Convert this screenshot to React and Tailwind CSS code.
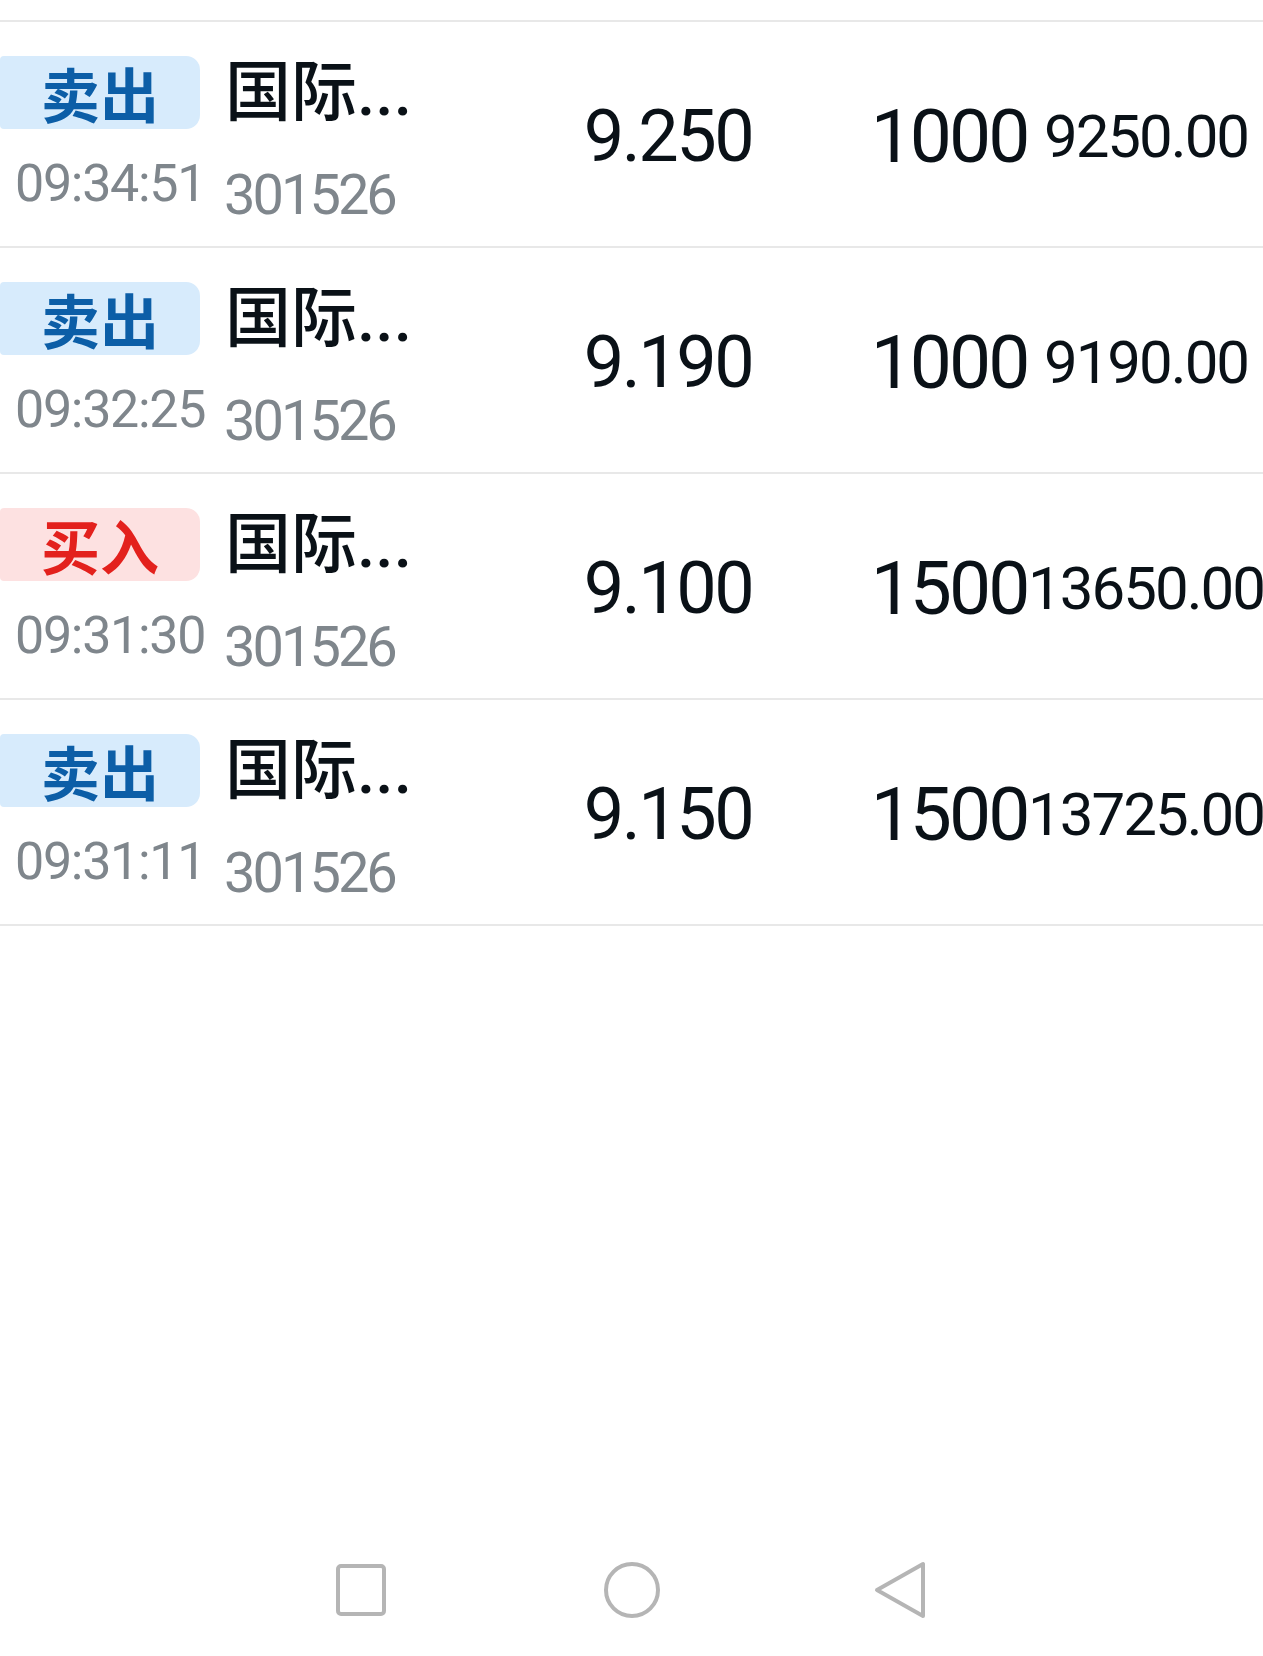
const trades = [
  { side: 'sell', time: '09:34:51', code: '301526', price: '9.250', qty: '1000', amount: '9250.00' },
  { side: 'sell', time: '09:32:25', code: '301526', price: '9.190', qty: '1000', amount: '9190.00' },
  { side: 'buy', time: '09:31:30', code: '301526', price: '9.100', qty: '1500', amount: '13650.00' },
  { side: 'sell', time: '09:31:11', code: '301526', price: '9.150', qty: '1500', amount: '13725.00' },
];

const num = "font-['Roboto','Liberation_Sans',sans-serif]";
const cjk = "font-['Roboto','Noto_Sans_CJK_SC',sans-serif]";

const SideBadge = ({ side }) =>
  side === 'buy' ? (
    <span className="flex h-[73px] w-[200px] items-center justify-center rounded-r-[14px] rounded-l-[4px] bg-[#fde1e1] font-['Noto_Sans_CJK_SC',sans-serif] text-[59px] font-bold leading-none text-[#e3211d]">
      买入
    </span>
  ) : (
    <span className="flex h-[73px] w-[200px] items-center justify-center rounded-r-[14px] rounded-l-[4px] bg-[#d7ebfc] font-['Noto_Sans_CJK_SC',sans-serif] text-[59px] font-bold leading-none text-[#0c5ea7]">
      卖出
    </span>
  );

const TradeRow = ({ trade }) => (
  <div className="flex h-[226px] border-t-2 border-[#e8e8e8]">
    <div className="flex w-[530px] shrink-0 flex-col pt-[34px]">
      <div className="flex items-center">
        <SideBadge side={trade.side} />
        <span className={`ml-[25px] ${cjk} text-[66px] font-medium leading-none text-[#0a1117]`}>
          国际...
        </span>
      </div>
      <div className="flex items-start">
        <span className={`mt-[29px] w-[200px] shrink-0 pl-[15px] ${num} text-[52px] leading-none tracking-[-1.3px] text-[#7f868c]`}>
          {trade.time}
        </span>
        <span className={`ml-[24px] mt-[38px] ${num} text-[56px] leading-none tracking-[-3px] text-[#7f868c]`}>
          {trade.code}
        </span>
      </div>
    </div>
    <div className="flex w-[276px] shrink-0 items-center justify-center pt-[6px]">
      <span className={`${num} text-[72px] leading-none tracking-[-2.5px] text-[#0a1117]`}>{trade.price}</span>
    </div>
    <div className="flex w-[286px] shrink-0 items-center justify-center pt-[4px]">
      <span className={`${num} text-[75px] leading-none tracking-[-3px] text-[#0a1117]`}>{trade.qty}</span>
    </div>
    <div className="flex w-[108px] shrink-0 items-center justify-center whitespace-nowrap pt-[5px]">
      <span className={`${num} text-[60px] leading-none tracking-[-2px] text-[#0a1117]`}>{trade.amount}</span>
    </div>
  </div>
);

const NavBar = () => (
  <div className="flex h-[132px] items-center justify-center gap-[208px]">
    <div className="flex w-[60px] justify-start">
      <svg width="54" height="56" viewBox="0 0 54 56" fill="none">
        <rect x="4" y="4" width="46" height="48" rx="3" stroke="#b5b5b5" strokeWidth="4" />
      </svg>
    </div>
    <div className="flex w-[60px] justify-center">
      <svg width="60" height="60" viewBox="0 0 60 60" fill="none">
        <circle cx="30" cy="30" r="26" stroke="#b5b5b5" strokeWidth="4" />
      </svg>
    </div>
    <div className="flex w-[60px] justify-center">
      <svg width="54" height="60" viewBox="0 0 54 60" fill="none">
        <path d="M50 4 L50 56 L4 30 Z" stroke="#b5b5b5" strokeWidth="4" strokeLinejoin="round" />
      </svg>
    </div>
  </div>
);

export default function App() {
  return (
    <div className="flex h-[1656px] w-full flex-col overflow-hidden bg-white">
      <div className="h-[20px] shrink-0" />
      {trades.map((t, i) => (
        <TradeRow key={i} trade={t} />
      ))}
      <div className="border-t-2 border-[#e8e8e8]" />
      <div className="flex-1" />
      <NavBar />
    </div>
  );
}
